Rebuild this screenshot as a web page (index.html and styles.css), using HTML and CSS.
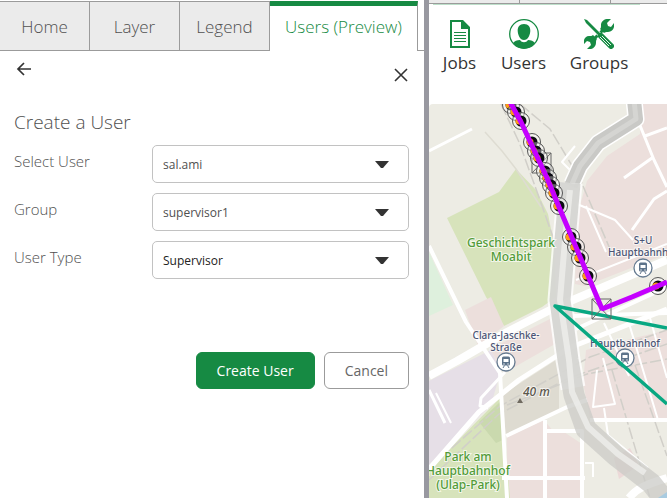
FILE: index.html
```html
<!DOCTYPE html>
<html lang="en">
<head>
<meta charset="utf-8">
<title>Users (Preview)</title>
<meta name="viewport" content="width=device-width, initial-scale=1">
<link rel="stylesheet" href="styles.css">
</head>
<body>
<div class="app">
  <main class="panel">
    <nav class="tabs">
      <a class="tab" href="#home">Home</a>
      <a class="tab" href="#layer">Layer</a>
      <a class="tab" href="#legend">Legend</a>
      <a class="tab tab-active" href="#users" aria-current="page">Users (Preview)</a>
      <span class="tab-rest"></span>
    </nav>
    <div class="panel-bar">
      <button class="icon-button" type="button" aria-label="Back">
        <svg width="16" height="16" viewBox="0 0 16 16"><path d="M15 8H2M8 2L2 8l6 6" fill="none" stroke="#333" stroke-width="1.700"/></svg>
      </button>
      <button class="icon-button close" type="button" aria-label="Close">
        <svg width="16" height="16" viewBox="0 0 16 16"><path d="M2 2l12 12M14 2L2 14" fill="none" stroke="#333" stroke-width="1.600"/></svg>
      </button>
    </div>
    <form class="form">
      <h1>Create a User</h1>
      <div class="field">
        <label for="user">Select User</label>
        <div class="select-box">
          <select id="user"><option>sal.ami</option></select>
          <svg class="caret" width="14" height="8" viewBox="0 0 14 8"><path d="M0 1h14L8 8H6z" fill="#333"/></svg>
        </div>
      </div>
      <div class="field">
        <label for="group">Group</label>
        <div class="select-box">
          <select id="group"><option>supervisor1</option></select>
          <svg class="caret" width="14" height="8" viewBox="0 0 14 8"><path d="M0 1h14L8 8H6z" fill="#333"/></svg>
        </div>
      </div>
      <div class="field">
        <label for="type">User Type</label>
        <div class="select-box">
          <select id="type" class="dark"><option>Supervisor</option></select>
          <svg class="caret" width="14" height="8" viewBox="0 0 14 8"><path d="M0 1h14L8 8H6z" fill="#333"/></svg>
        </div>
      </div>
      <div class="actions">
        <button class="button primary" type="button">Create User</button>
        <button class="button" type="button">Cancel</button>
      </div>
    </form>
  </main>
  <div class="divider"></div>
  <section class="map-side">
    <div class="strip"><span></span><span></span><span></span></div>
    <div class="tools">
      <button class="tool" type="button">
        <svg width="30" height="30" viewBox="0 0 30 30"><path fill="#168a43" fill-rule="evenodd" d="M5 1h13l7 7v21H5zM7 3v24h16V10h-7V3z"/><path d="M9 13.500h12M9 16.500h12M9 19.500h12M9 22.500h12" stroke="#168a43"/></svg>
        <span>Jobs</span>
      </button>
      <button class="tool" type="button">
        <svg width="30" height="30" viewBox="0 0 30 30"><circle cx="15" cy="15" r="14.300" fill="#fff" stroke="#168a43" stroke-width="1.300"/><path fill="#168a43" d="M15 5c4.500 0 6.500 3 6.300 7-.2 4-2.200 9-6.300 9s-6.100-5-6.300-9C8.500 8 10.500 5 15 5zM4 24c1.500-2 4-3 7-3 1 1.500 2.300 2.200 4 2.200s3-.7 4-2.200c3 0 5.500 1 7 3-3 4-7 5.500-11 5.500S7 28 4 24z"/></svg>
        <span>Users</span>
      </button>
      <button class="tool" type="button">
        <svg width="30" height="30" viewBox="0 0 30 30"><path d="M8 22L22 8" stroke="#168a43" stroke-width="3"/><path fill="#168a43" d="M27 0l-4 4 1 3 3 1 3-4c1 4-1 9-6 9-2 0-3 0-4 1l-4-4c1-1 1-2 1-4 0-4 4-7 10-6zM3 30l4-4-1-3-3-1-3 3c-1-4 1-8 5-8 2 0 3 0 4-1l4 4c-1 1-1 2-1 4 0 4-4 7-8 6z"/><path d="M9 9l9 9" stroke="#fff" stroke-width="4"/><path d="M0 0l3 1 14 14-2 2L2 4z" fill="#168a43"/><path d="M17 17l10 10" stroke="#168a43" stroke-width="6" stroke-linecap="round"/><path d="M18 17l9 9M16 18l9 9" stroke="#fff" stroke-width=".9"/></svg>
        <span>Groups</span>
      </button>
    </div>
    <div class="map">
      <svg class="map-art" viewBox="429 104 238 394" preserveAspectRatio="xMinYMin slice" role="img" aria-label="Map of Moabit">
        <defs>
          <g id="stop"><circle r="8.500" fill="#fff" fill-opacity=".35" stroke="#555" stroke-width="1"/><circle r="5.500" fill="#0b0a12"/><circle cx="-2" cy="0" r="3.500" fill="#ff9a16"/></g>
          <g id="station"><circle r="9" fill="#fff" stroke="#667b91" stroke-width="1.300"/><rect x="-4" y="-5.500" width="8" height="9" rx="1.500" fill="#5d738a"/><rect x="-2.500" y="-3" width="5" height="3" fill="#fff"/><path d="M-3 6l1.500-2.500M3 6L1.500 3.500" stroke="#5d738a"/><circle cx="-2" cy="2" r=".7" fill="#fff"/><circle cx="2" cy="2" r=".7" fill="#fff"/></g>
        </defs>
        <rect x="429" y="104" width="238" height="394" fill="#edece4"/>
        <!-- land use -->
        <path fill="#ecdfdc" d="M641 104h26v150l-82 32-10-2 2-68 10-35 20-25 33-22z"/>
        <path fill="#d7e3bb" d="M516 169l20 21 12 24 6 30 2 53-14 10-38 19-18-29-39-79 52-26z"/>
        <path fill="#ecdfdc" d="M491 297l13 29-26 20-13-36z"/>
        <path fill="#def0dd" d="M429 252l24 53-24 11z"/>
        <path fill="#e6dfe7" d="M429 381l62-31 10 20-10 35-62 60z"/>
        <path fill="#ecdfdc" d="M490 349l60-30 5 25-51 29zM507 437l37-17 10 12-3 66h-44zM546 432h18l18 12v54h-36zM586 350l81-20v90l-77-2-7-35z"/>
        <path fill="#d7e3bb" d="M429 470l72-73 4 41 5 60h-81z"/>
        <path fill="#cad9ae" d="M479 422l21-20 5 37-9 4z"/>
        <path fill="#dedbd1" d="M502 395l57-37v52l-53 27z"/>
        <path fill="#ecd9d8" d="M614 458l16-10 9 17-20 14z"/>
        <!-- rail -->
        <g fill="none" stroke="#d1cfc9" stroke-width="1.500">
          <path d="M501 104l18 38 21 58 14 40M520 104l30 25 30 50 30 70M429 480l70-66 70-36 98-34M429 468l71-62 90-49 77-27M612 370l38 128M635 365l32 91M507 405l80-31 80-15" stroke-dasharray="12 3"/>
          <path d="M485 132l17 19 14 18 25 38" stroke="#dedcd2"/>
        </g>
        <!-- roads -->
        <g fill="none" stroke="#fff" stroke-linejoin="round">
          <path stroke-width="4" d="M429 246l37 76 34 51 7 125"/>
          <path stroke-width="8" d="M429 376l28-15 50-29 47-24 113-48"/>
          <path stroke-width="5" d="M429 469l50-57 40-32 50-32 98-39"/>
          <path stroke-width="4" d="M576 329l91-42M573 316l94-3M506 436l61-29 20-7M502 478h83M545 498V420M547 431h35v67M590 420h77"/>
          <path stroke-width="3" d="M429 151l43-22M639 123l15 37 13 27M645 136l22-8M624 178l28-20M632 230l22-31 13-8M429 390l16 33M505 372l-24 26-1 8 8 2"/>
          <path stroke-width="2" d="M575 146l-13 16 8 8M577 204l38 16 18 20M586 206l20 46M576 280l91-36M597 370l-4 37 22-3-12-46M604 408l4 27 40 33M628 320l30 100M604 323l25 53M650 318l17 60M436 393l15 30M585 463h8v14"/>
          <path stroke-width="8" d="M629 498c8-10 18-14 38-20"/>
        </g>
        <!-- river -->
        <g fill="none" stroke-linejoin="round">
          <path stroke="#fff" stroke-width="17" d="M634 100l2 19-38 24-18 23-8 18"/>
          <path stroke="#c9c9c6" stroke-width="14" d="M634 100l2 19-38 24-18 23-9 20"/>
          <path stroke="#d5d5d2" stroke-width="5" d="M634 100l2 19-38 24-18 23-9 20"/>
          <path stroke="#fff" stroke-opacity=".8" stroke-width="25" d="M570 183l-5 57-5 60 8 60 5 28"/>
          <path stroke="#cbcbc7" stroke-opacity=".75" stroke-width="21" d="M570 183l-5 57-5 60 8 60 6 35 12 34 30 27 35 27 16 20"/>
          <path stroke="#f0f0ed" stroke-opacity=".75" stroke-width="6" d="M570 190l-5 50-5 60 9 60 3 32 16 35 30 27 27 19"/>
        </g>
        <path fill="#a9cbe0" d="M658 498l9-6v6z"/>
        <!-- place names -->
        <g class="place park" text-anchor="middle">
          <text x="511" y="247">Geschichtspark</text><text x="511" y="261">Moabit</text>
          <text x="468" y="461">Park am</text><text x="468" y="475">Hauptbahnhof</text><text x="468" y="489">(Ulap-Park)</text>
        </g>
        <g class="place transit" text-anchor="middle">
          <text x="643" y="244">S+U</text><text x="643" y="256">Hauptbahnhof</text>
          <text x="506" y="339">Clara-Jaschke-</text><text x="506" y="351">Straße</text>
          <text x="625" y="347">Hauptbahnhof</text>
        </g>
        <text class="place height" x="523" y="396">40 m</text>
        <path fill="#706a60" d="M517 403l3-5 3 5z"/>
        <use href="#station" x="643" y="268"/><use href="#station" x="506" y="362"/><use href="#station" x="625" y="358"/>
        <!-- routes -->
        <path d="M667 328l-112-22 112 98" fill="none" stroke="#08a882" stroke-width="3.500" stroke-linejoin="round"/>
        <g fill="none" stroke="#666"><path d="M532 153h19v20h-19zl19 20M551 153l-19 20M592 299h19v20h-19zl19 20M611 299l-19 20"/></g>
        <use href="#stop" x="511" y="105"/><use href="#stop" x="516" y="112"/><use href="#stop" x="521" y="121"/>
        <use href="#stop" x="532" y="142"/><use href="#stop" x="536" y="151"/><use href="#stop" x="539" y="158"/>
        <use href="#stop" x="545" y="171"/><use href="#stop" x="548" y="178"/><use href="#stop" x="551" y="185"/><use href="#stop" x="554" y="193"/>
        <use href="#stop" x="559" y="206"/><use href="#stop" x="571" y="237"/><use href="#stop" x="576" y="247"/><use href="#stop" x="580" y="258"/><use href="#stop" x="588" y="276"/><use href="#stop" x="658" y="286"/>
        <path d="M509 100l12 22 26 56 12 29 14 33 16 38 13 31 30-12 35-15" fill="none" stroke="#c400ff" stroke-width="5" stroke-linejoin="bevel"/>
      </svg>
    </div>
  </section>
</div>
</body>
</html>
```
FILE: styles.css
```css
* { box-sizing: border-box; }

body {
  margin: 0;
  background: #fff;
  color: #505050;
  font-family: "Open Sans", "Noto Sans", sans-serif;
  font-size: 15px;
  font-weight: 400;
}

button, select { font: inherit; color: inherit; }
svg { display: block; }

.app {
  display: grid;
  grid-template-columns: minmax(0, 424fr) 5px minmax(0, 238fr);
  min-height: 100vh;
}

.divider { background: #9898a0; }

.tabs {
  display: flex;
  height: 50px;
  margin-top: 1px;
}

.tab {
  flex: 0 0 90px;
  display: flex;
  align-items: center;
  justify-content: center;
  background: #ebebeb;
  border: solid #9b9b9b;
  border-width: 1px 1px 1px 0;
  color: #505050;
  font-size: 17px;
  font-weight: 300;
  text-decoration: none;
  white-space: nowrap;
}

.tab-active {
  flex-basis: 148px;
  padding-bottom: 5px;
  background: #fff;
  border-top: 5px solid #168a43;
  border-bottom: 0;
  color: #168a43;
}

.tab-rest { flex: 1; border-bottom: 1px solid #9b9b9b; }

.panel-bar {
  display: flex;
  justify-content: space-between;
  height: 34px;
  margin: 10px 15px 0 16px;
}

.icon-button {
  align-self: flex-start;
  padding: 0;
  border: 0;
  background: none;
}

.icon-button.close { margin-top: 6px; }

.form { padding: 14px 15px 0 14px; }

h1 {
  margin: 0 0 10px;
  font-size: 19px;
  font-weight: 300;
  line-height: 26px;
}

.field {
  display: grid;
  grid-template-columns: 138px minmax(0, 1fr);
  margin-bottom: 10px;
}

.field label { font-size: 15px; font-weight: 300; line-height: 32px; }

.select-box { position: relative; }

select {
  appearance: none;
  display: block;
  width: 100%;
  height: 38px;
  padding: 0 36px 0 10px;
  border: 1px solid #c2c2c2;
  border-radius: 5px;
  background: #fff;
  font-size: 12px;
}

select.dark { color: #222; }

.caret {
  position: absolute;
  top: 15px;
  right: 20px;
  pointer-events: none;
}

.actions {
  display: flex;
  justify-content: flex-end;
  gap: 9px;
  margin-top: 73px;
}

.button {
  height: 37px;
  padding: 0 20px;
  border: 1px solid #9b9b9b;
  border-radius: 6px;
  background: #fff;
  color: #666;
  font-size: 14px;
}

.primary {
  border-color: #168a43;
  background: #168a43;
  color: #fff;
}

.map-side {
  display: flex;
  flex-direction: column;
  min-width: 0;
}

.strip {
  display: flex;
  height: 4px;
  border-bottom: 1px solid #9b9b9b;
  background: #ebebeb;
}

.strip span { flex: 0 0 91px; border-right: 1px solid #9b9b9b; }
.strip span:last-child { flex: 1; border: 0; }

.tools {
  display: flex;
  gap: 11px;
  height: 100px;
  margin: 0 27px 0 4px;
  padding: 14px 0 0;
  border-top: 1px solid #bddfca;
}

.tool {
  display: flex;
  flex-direction: column;
  align-items: center;
  align-self: flex-start;
  width: 53px;
  padding: 0;
  border: 0;
  background: none;
  color: #333;
  font-size: 17px;
  line-height: 28px;
}

.tool:last-child { width: 76px; }

.map {
  position: relative;
  flex: 1;
  min-height: 394px;
  overflow: hidden;
  border-top-left-radius: 4px;
}

.map-art { position: absolute; inset: 0; width: 100%; height: 100%; }

.place {
  font-family: "Noto Sans", sans-serif;
  font-size: 12px;
  font-weight: 500;
  stroke: #fff;
  stroke-opacity: .7;
  stroke-width: 2px;
  paint-order: stroke;
}

.park { fill: #519b38; }
.transit { fill: #4b5575; font-size: 10px; }
.height { fill: #5b564c; font-style: italic; }
```
